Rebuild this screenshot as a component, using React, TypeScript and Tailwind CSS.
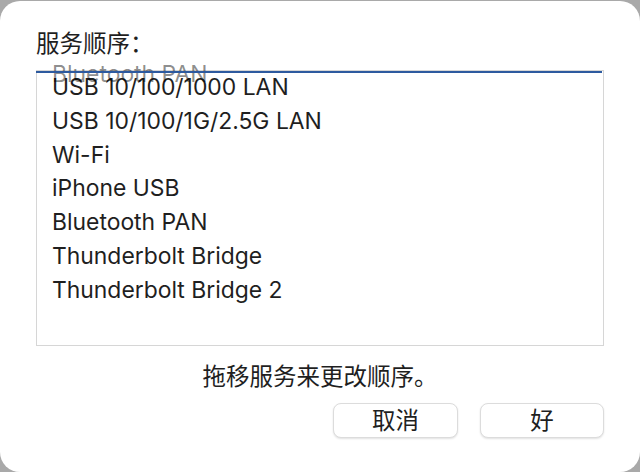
import React from "react";

const items = [
  "USB 10/100/1000 LAN",
  "USB 10/100/1G/2.5G LAN",
  "Wi-Fi",
  "iPhone USB",
  "Bluetooth PAN",
  "Thunderbolt Bridge",
  "Thunderbolt Bridge 2",
];

const font = { fontFamily: 'Inter, "Noto Sans CJK SC", sans-serif' };

export default function App() {
  return (
    <div className="w-[640px] h-[472px] bg-[#a9a9a9] overflow-hidden" style={font}>
      <div className="mt-[1px] h-[471px] w-[640px] bg-white rounded-[20px] flex flex-col px-[36px] pt-[31px] text-[#1f1f1f]">
        <div className="h-[24px] leading-[24px] text-[23.5px]">服务顺序：</div>
        <div className="relative mt-[14px] h-[276px] border border-[#d6d6d6] bg-white">
          <div className="flex flex-col">
            {items.map((t) => (
              <div key={t} className="h-[33.8px] leading-[33px] pl-[15px] text-[22.9px] whitespace-nowrap">
                {t}
              </div>
            ))}
          </div>
          <div className="absolute left-[15px] top-[-13px] h-[33.8px] leading-[33px] text-[22.9px] text-[#000000]/45 whitespace-nowrap">
            Bluetooth PAN
          </div>
          <div className="absolute left-[-1px] right-[1px] top-[0px] h-[2px] bg-[#2d5a9f]" />
        </div>
        <div className="mt-[17px] h-[28px] leading-[28px] text-[23.5px] text-center">拖移服务来更改顺序。</div>
        <div className="mt-[12px] flex justify-end gap-[22px]">
          <button className="w-[125px] h-[35px] rounded-[8px] bg-white border border-[#dcdcdc] shadow-[0_1px_2px_rgba(0,0,0,0.12)] text-[23.5px] leading-[33px] text-[#1f1f1f]">
            取消
          </button>
          <button className="w-[124px] h-[35px] rounded-[8px] bg-white border border-[#dcdcdc] shadow-[0_1px_2px_rgba(0,0,0,0.12)] text-[23.5px] leading-[33px] text-[#1f1f1f]">
            好
          </button>
        </div>
      </div>
    </div>
  );
}
